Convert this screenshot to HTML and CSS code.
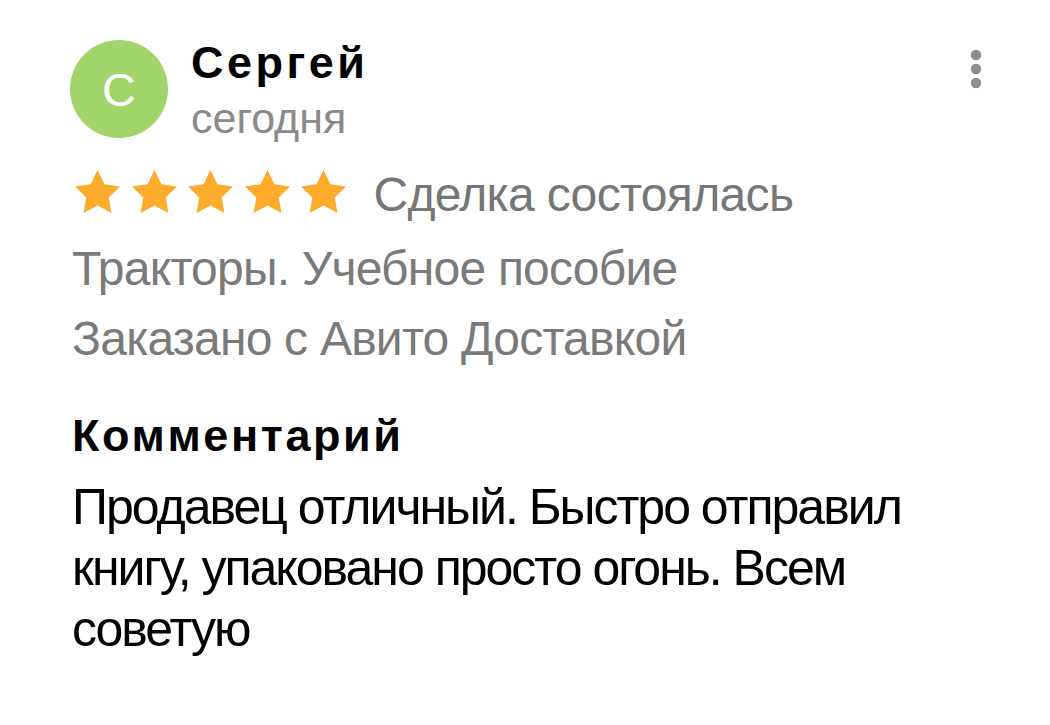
FILE: index.html
```html
<!DOCTYPE html>
<html lang="ru">
<head>
<meta charset="utf-8">
<link rel="stylesheet" href="styles.css">
</head>
<body>
<div class="review">
  <div class="header">
    <div class="avatar">С</div>
    <div class="who">
      <div class="name">Сергей</div>
      <div class="date">сегодня</div>
    </div>
    <svg class="menu" width="12" height="40" viewBox="0 0 12 40">
      <circle cx="6" cy="6" r="5.2"/>
      <circle cx="6" cy="20" r="5.2"/>
      <circle cx="6" cy="34" r="5.2"/>
    </svg>
  </div>
  <div class="rating">
    <div class="stars">
      <svg class="star" viewBox="2 2 20 19.02"><polygon points="12,2 15.09,8.26 22,9.27 17,14.14 18.18,21.02 12,17.77 5.82,21.02 7,14.14 2,9.27 8.91,8.26"/></svg>
      <svg class="star" viewBox="2 2 20 19.02"><polygon points="12,2 15.09,8.26 22,9.27 17,14.14 18.18,21.02 12,17.77 5.82,21.02 7,14.14 2,9.27 8.91,8.26"/></svg>
      <svg class="star" viewBox="2 2 20 19.02"><polygon points="12,2 15.09,8.26 22,9.27 17,14.14 18.18,21.02 12,17.77 5.82,21.02 7,14.14 2,9.27 8.91,8.26"/></svg>
      <svg class="star" viewBox="2 2 20 19.02"><polygon points="12,2 15.09,8.26 22,9.27 17,14.14 18.18,21.02 12,17.77 5.82,21.02 7,14.14 2,9.27 8.91,8.26"/></svg>
      <svg class="star" viewBox="2 2 20 19.02"><polygon points="12,2 15.09,8.26 22,9.27 17,14.14 18.18,21.02 12,17.77 5.82,21.02 7,14.14 2,9.27 8.91,8.26"/></svg>
    </div>
    <div class="status">Сделка состоялась</div>
  </div>
  <div class="meta">
    <div class="meta-line">Тракторы. Учебное пособие</div>
    <div class="meta-line">Заказано с Авито Доставкой</div>
  </div>
  <div class="comment-title">Комментарий</div>
  <div class="comment-text">Продавец отличный. Быстро отправил книгу, упаковано просто огонь. Всем советую</div>
</div>
</body>
</html>
```
FILE: styles.css
```css
html, body {
  margin: 0;
  padding: 0;
  background: #ffffff;
}
body {
  font-family: "Liberation Sans", Arial, sans-serif;
  color: #000000;
}
.review {
  padding: 40px 68px 0 72px;
}
.header {
  display: flex;
  align-items: flex-start;
}
.avatar {
  width: 98px;
  height: 98px;
  border-radius: 50%;
  background: #a1d46a;
  color: #ffffff;
  font-size: 47px;
  font-weight: 400;
  display: flex;
  align-items: center;
  justify-content: center;
  margin-left: -2px;
  flex-shrink: 0;
}
.who {
  margin-left: 23px;
  margin-top: -2px;
}
.name {
  font-size: 45px;
  font-weight: 700;
  line-height: 50px;
  letter-spacing: 3.5px;
}
.date {
  margin-top: 6px;
  font-size: 43px;
  line-height: 48px;
  color: #8a8a8a;
}
.menu {
  margin-left: auto;
  margin-top: 9px;
  fill: #8c8c8c;
}
.rating {
  display: flex;
  align-items: flex-start;
  margin-top: 25px;
}
.stars {
  display: flex;
  gap: 11.6px;
  margin-top: 3px;
  margin-left: 3px;
}
.star {
  width: 45px;
  height: 43px;
  fill: #fdab2b;
}
.status {
  margin-left: 27px;
  font-size: 48px;
  line-height: 56px;
  letter-spacing: -0.65px;
  color: #767676;
}
.meta {
  margin-top: 11px;
}
.meta-line {
  font-size: 48px;
  line-height: 70px;
  letter-spacing: -0.78px;
  color: #7a7a7a;
}
.comment-title {
  margin-top: 34px;
  font-size: 45px;
  font-weight: 700;
  line-height: 56px;
  letter-spacing: 2.6px;
}
.comment-text {
  margin-top: 13px;
  font-size: 50px;
  line-height: 61px;
  letter-spacing: -2px;
  width: 880px;
}
```
